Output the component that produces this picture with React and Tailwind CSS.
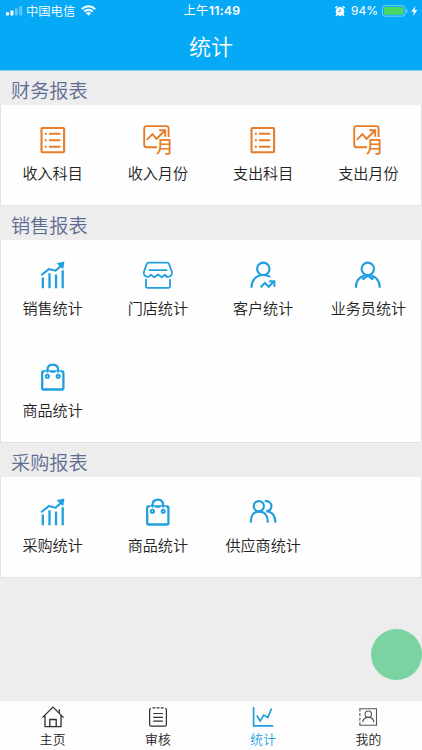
import React from 'react';

const ListIcon = () => (
  <svg className="size-8 text-[#e67d28]" viewBox="0 0 32 32" fill="none" stroke="currentColor" strokeWidth="2.1">
    <rect x="4.5" y="4" width="22.6" height="24.2" rx="1" />
    <path d="M12 9.8h11.3M12 16.2h11.3M12 22.8h11.3" strokeWidth="1.9" />
    <path d="M7.8 9.8h2M7.8 16.2h2M7.8 22.8h2" strokeWidth="1.9" />
  </svg>
);

const MonthIcon = () => (
  <svg className="size-8 overflow-visible text-[#e67d28]" viewBox="0 0 32 32" fill="none" stroke="currentColor" strokeWidth="1.9">
    <path d="M15 23.2H4.6a2.4 2.4 0 0 1-2.4-2.4V4.5a2.4 2.4 0 0 1 2.4-2.4h19.6a2.4 2.4 0 0 1 2.4 2.4v8.6" />
    <path d="M4.8 15.8l5.6-5.6 4.2 4.6 8-7.8M17.2 6.2h6v6.6" />
    <text
      x="14"
      y="28.8"
      fontSize="17.5"
      fontWeight="500"
      fill="currentColor"
      stroke="none"
      fontFamily="Noto Sans CJK SC, sans-serif"
    >
      月
    </text>
  </svg>
);

const GrowthIcon = () => (
  <svg className="size-8 text-[#1f9fdd]" viewBox="0 0 32 32" fill="none" stroke="currentColor" strokeWidth="2.1">
    <path d="M4.2 16.2l7.6-6.1 6.8 1.6 6-5.5" />
    <path d="M19.6 4.2l7.8-1.7-1.2 7.8z" fill="currentColor" stroke="none" />
    <path d="M5.8 29.2V18.4M12.5 29.2V14.2M19 29.2V15.6M25.7 29.2V11.3" strokeWidth="2.3" />
  </svg>
);

const StoreIcon = () => (
  <svg className="size-8 text-[#1f9fdd]" viewBox="0 0 32 32" fill="none" stroke="currentColor" strokeWidth="1.8" strokeLinecap="round" strokeLinejoin="round">
    <path d="M6.8 3.7h18.2q1.5 0 2.1 1.4l2.6 7.1c1 3-.5 5.4-3.3 5.7-2 .2-2.8-.8-3.3-2.3l-3.4 2.7-3.7-2.7-3.7 2.7-3.5-2.7c-.6 1.5-1.6 2.5-3.5 2.3-2.8-.3-4.2-2.7-3.2-5.7L4.7 5.1q.6-1.4 2.1-1.4z" />
    <path d="M7.6 11.2h17" />
    <path d="M4 20.6v7q0 1.2 1.3 1.2h21.4q1.3 0 1.3-1.2v-7" />
  </svg>
);

const CustomerIcon = () => (
  <svg className="size-8 text-[#1f9fdd]" viewBox="0 0 32 32" fill="none" stroke="currentColor" strokeWidth="2.1">
    <circle cx="16.3" cy="9.8" r="6.2" />
    <path d="M4.5 28.8c0-6.5 3.7-12.8 11.8-12.8 3.1 0 5.2.8 6.9 2" />
    <path d="M13.6 28.2l4.3-4.3 3.8 3.8 4.5-4.4" />
    <path d="M22.2 22.4h5.2v5.4" />
  </svg>
);

const SalesmanIcon = () => (
  <svg className="size-8 text-[#1f9fdd]" viewBox="0 0 32 32" fill="none" stroke="currentColor" strokeWidth="2.1">
    <circle cx="15.8" cy="9.8" r="6.2" />
    <path d="M3.8 28.8c0-6.6 3.8-12.6 12-12.8 8.2.2 12 6.2 12 12.8" />
    <path d="M9.4 17.6l2.2 2.4 4.2-3.6 4.2 3.6 2.2-2.4" strokeWidth="2.2" />
  </svg>
);

const BagIcon = () => (
  <svg className="size-8 text-[#1f9fdd]" viewBox="0 0 32 32" fill="none" stroke="currentColor" strokeWidth="2.3">
    <rect x="5.2" y="10.5" width="21.2" height="18" rx="1" />
    <path d="M10.4 11V9.4c0-3.7 2.2-5.7 5.4-5.7s5.4 2 5.4 5.7V11" />
    <circle cx="10.4" cy="14.2" r="2.8" fill="white" stroke="white" />
    <circle cx="21.2" cy="14.2" r="2.8" fill="white" stroke="white" />
    <circle cx="10.4" cy="15.2" r="1.6" strokeWidth="1.9" />
    <circle cx="21.2" cy="15.2" r="1.6" strokeWidth="1.9" />
    <path d="M10.5 8.5v3.2M21.1 8.5v3.2" strokeWidth="1.8" />
  </svg>
);

const SupplierIcon = () => (
  <svg className="size-8 text-[#1f9fdd]" viewBox="0 0 32 32" fill="none" stroke="currentColor" strokeWidth="2.1">
    <circle cx="11.8" cy="10.2" r="5.1" />
    <path d="M3.9 26.8v-1.5c0-6.3 3-9.7 8.2-9.7s8.6 3.4 8.6 9.7v1.5" />
    <path d="M17.7 5.3c4.3-.8 6.7 1.6 6.7 4.8s-2 5-5.2 5.2c5.7.3 9.1 4.2 9.1 11.5" />
  </svg>
);

const HomeIcon = () => (
  <svg className="h-6 w-6 text-[#303030]" viewBox="0 0 24 24" fill="none" stroke="currentColor" strokeWidth="1.3">
    <path d="M1.4 12.6L12 2.1l10.6 10.5M4 10.4v11.2h16V10.4" />
    <path d="M8.8 21.5v-7h6.4v7M18.3 8V4.2" />
  </svg>
);

const AuditIcon = () => (
  <svg className="h-6 w-6 text-[#303030]" viewBox="0 0 24 24" fill="none" stroke="currentColor" strokeWidth="1.2">
    <path d="M4.8 3.3Q3.6 3.3 3.6 5v14.5q0 1.6 1.6 1.6h13.6q1.6 0 1.6-1.6V5q0-1.7-1.2-1.7" />
    <path d="M6.6 2.8h2.8M10.7 2.8h2.8M14.8 2.8h2.8M7.3 8.5h9.6M7.3 12.3h9.6M7.3 16.1h9.6" />
  </svg>
);

const StatsIcon = () => (
  <svg className="h-6 w-6 text-[#1f9fdd]" viewBox="0 0 24 24" fill="none" stroke="currentColor" strokeWidth="1.7">
    <path d="M2.6 2v18.9h19.6" />
    <path d="M5.8 10.5l3.4 5.4 3.6-5.8 4 2.4 3.8-9" />
  </svg>
);

const ProfileIcon = () => (
  <svg className="h-6 w-6 text-[#555]" viewBox="0 0 24 24" fill="none" stroke="currentColor" strokeWidth="1.1">
    <path d="M3.5 3.7h17v16.5h-17" />
    <path d="M3.9 3.5v17" strokeDasharray="3 1.6" />
    <circle cx="12.3" cy="9.2" r="3.2" />
    <path d="M6.6 17.2c.5-2.9 2.8-4.8 5.7-4.8s5.2 1.9 5.7 4.8" />
  </svg>
);

const StatusBar = () => (
  <div className="grid h-[21px] grid-cols-3 items-center pl-1.5 pr-1 text-white">
    <div className="flex items-center">
      <svg className="h-3 w-[17px]" viewBox="0 0 17 12" fill="currentColor">
        <rect x="0" y="7.2" width="3" height="3.2" rx=".6" />
        <rect x="4.4" y="5.6" width="3" height="4.8" rx=".6" />
        <rect x="8.8" y="3.3" width="3" height="7.1" rx=".6" opacity=".35" />
        <rect x="13.2" y="1" width="3" height="9.4" rx=".6" opacity=".35" />
      </svg>
      <span className="ml-[3px] whitespace-nowrap text-[12.3px] font-[350] leading-5">中国电信</span>
      <svg className="ml-1.5 h-[11px] w-[15px]" viewBox="0 0 15 11" fill="none" stroke="currentColor" strokeWidth="1.9">
        <path d="M.8 4.1c3.8-3.8 9.6-3.8 13.4 0M3.2 6.6c2.4-2.4 6.2-2.4 8.6 0" />
        <path d="M4.9 8.1c1.5-1.4 3.7-1.4 5.2 0L7.5 10.8z" fill="currentColor" stroke="none" />
      </svg>
    </div>
    <div className="whitespace-nowrap text-center font-[Inter,'Noto_Sans_CJK_SC',sans-serif] text-[12.3px] leading-5 tracking-[0.3px]">
      上午<span className="font-semibold">11:49</span>
    </div>
    <div className="flex items-center justify-end">
      <svg className="h-3 w-3" viewBox="0 0 12 12" fill="none" stroke="currentColor">
        <circle cx="6" cy="6.4" r="4.3" fill="currentColor" stroke="none" />
        <path d="M1.3 3.1L3.4 1.2M10.7 3.1L8.6 1.2M3 9.5l-1 1.4M9 9.5l1 1.4" strokeWidth="1.4" />
        <path d="M6.2 3.8v2.9H4" stroke="#06a9f5" strokeWidth=".9" />
      </svg>
      <span className="ml-[5px] font-[Inter,sans-serif] text-[12px] leading-5">94%</span>
      <svg className="ml-1 h-3 w-[26px]" viewBox="0 0 26 12">
        <rect x=".5" y=".6" width="22.6" height="10.6" rx="2.6" fill="none" stroke="white" strokeOpacity=".45" />
        <rect x="2" y="2" width="19.4" height="7.8" rx="1.2" fill="#4cd864" />
        <path d="M24.3 4v4q1.4-.6 1.4-2t-1.4-2z" fill="white" fillOpacity=".5" />
      </svg>
      <svg className="ml-[3px] h-2.5 w-[7px]" viewBox="0 0 7 10" fill="currentColor">
        <path d="M4.4 0L.3 5.7h2.6L2.1 10l4.3-5.9H3.7z" />
      </svg>
    </div>
  </div>
);

const sections = [
  {
    title: '财务报表',
    height: 'h-[101px]',
    items: [
      { label: '收入科目', icon: ListIcon },
      { label: '收入月份', icon: MonthIcon },
      { label: '支出科目', icon: ListIcon },
      { label: '支出月份', icon: MonthIcon },
    ],
  },
  {
    title: '销售报表',
    height: 'h-[203px]',
    items: [
      { label: '销售统计', icon: GrowthIcon },
      { label: '门店统计', icon: StoreIcon },
      { label: '客户统计', icon: CustomerIcon },
      { label: '业务员统计', icon: SalesmanIcon },
      { label: '商品统计', icon: BagIcon },
    ],
  },
  {
    title: '采购报表',
    height: 'h-[101px]',
    items: [
      { label: '采购统计', icon: GrowthIcon },
      { label: '商品统计', icon: BagIcon },
      { label: '供应商统计', icon: SupplierIcon },
    ],
  },
];

const tabs = [
  { label: '主页', icon: HomeIcon },
  { label: '审核', icon: AuditIcon },
  { label: '统计', icon: StatsIcon, active: true },
  { label: '我的', icon: ProfileIcon },
];

const Section = ({ title, height, items }) => (
  <section>
    <h2 className="h-[34px] pl-[11px] text-[19.2px] font-[350] leading-[39px] text-[#5f6c92]">{title}</h2>
    <div className={`grid grid-cols-4 content-start bg-[#fefefe] pr-px shadow-[inset_1px_-1px_0_#e2e2e4,inset_-1px_0_0_#e2e2e4] ${height}`}>
      {items.map(({ label, icon: Icon }) => (
        <div key={label} className="flex h-[101px] flex-col items-center pt-[19px] nth-[n+5]:mt-px">
          <Icon />
          <span className="mt-[5px] whitespace-nowrap text-[15.1px] font-[350] leading-[22px] text-[#222]">{label}</span>
        </div>
      ))}
    </div>
  </section>
);

const App = () => (
  <div className="relative flex h-[750px] w-[422px] flex-col overflow-hidden bg-[#ededee] font-['Noto_Sans_CJK_SC',sans-serif]">
    <header className="h-[71px] border-b border-[#8fcdec] bg-[#06a9f5]">
      <StatusBar />
      <h1 className="text-center text-[22px] font-[350] leading-[49px] text-white">统计</h1>
    </header>

    <main className="flex-1">
      {sections.map((section) => (
        <Section key={section.title} {...section} />
      ))}
    </main>

    <nav className="grid h-[49px] grid-cols-4 bg-[#fdfdfd] pr-px">
      {tabs.map(({ label, icon: Icon, active }) => (
        <div key={label} className="flex flex-col items-center pt-1">
          <Icon />
          <span className={`text-[12.8px] font-[350] leading-[20px] ${active ? 'text-[#1f9fdd]' : 'text-[#222]'}`}>{label}</span>
        </div>
      ))}
    </nav>

    {/* Floating button */}
    <div className="absolute right-0 top-[629px] size-[51px] rounded-full bg-[#7ad3a0]" />
  </div>
);

export default App;
